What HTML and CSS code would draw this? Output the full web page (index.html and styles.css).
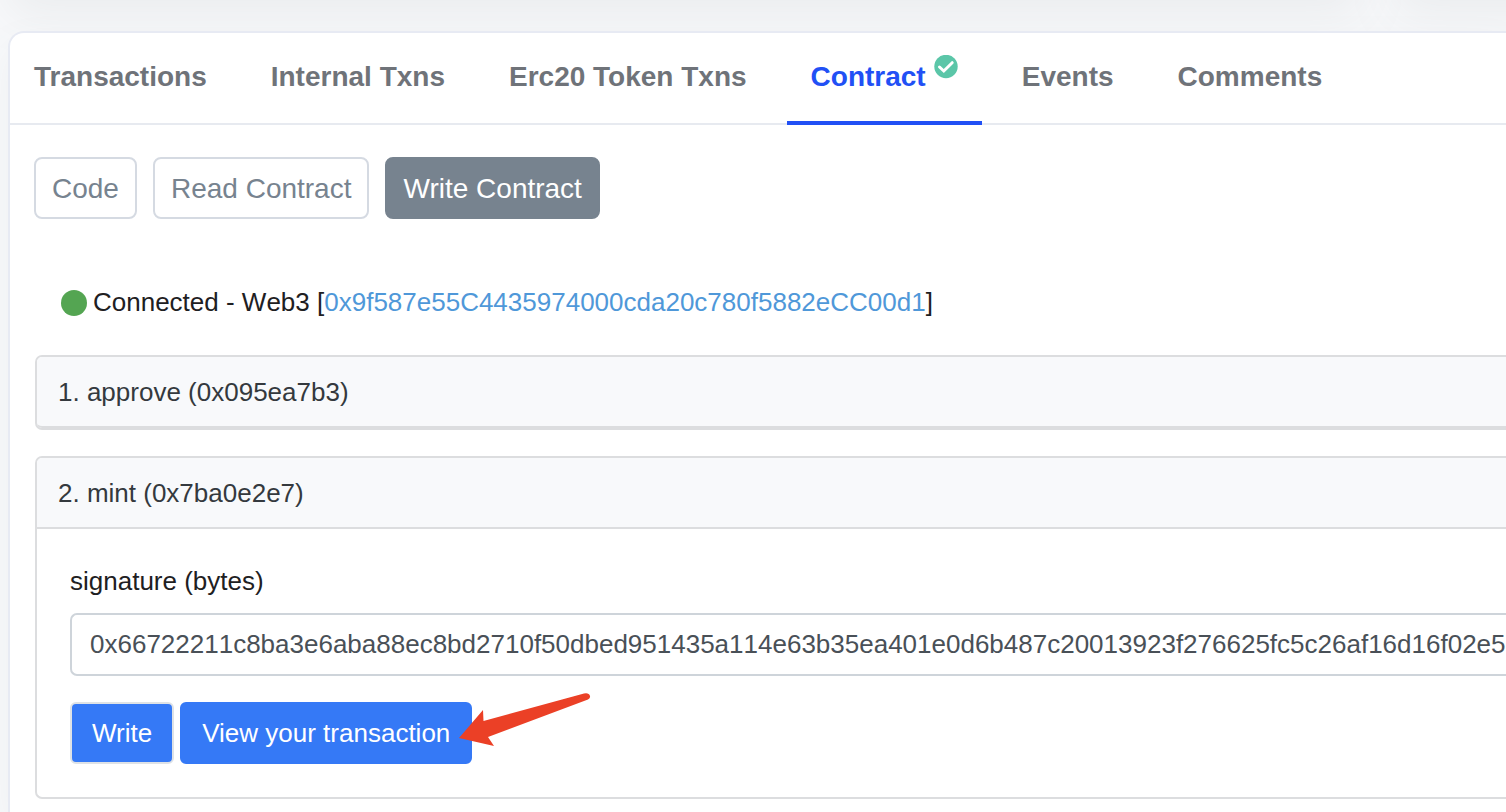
FILE: index.html
```html
<!DOCTYPE html>
<html lang="en">
<head>
  <meta charset="UTF-8" />
  <meta name="viewport" content="width=device-width, initial-scale=1.0"/>
  <title>Write Contract</title>
  <link rel="stylesheet" href="styles.css">
</head>
<body>

  <!-- Bottom edge of the summary cards -->
  <div class="summary">
    <div class="summary-card summary-main"></div>
    <div class="summary-card summary-side"></div>
  </div>

  <main class="card">
    <!-- Tabs -->
    <nav class="tabs">
      <a href="#transactions">Transactions</a>
      <a href="#internaltx">Internal Txns</a>
      <a href="#tokentxns">Erc20 Token Txns</a>
      <a href="#code" class="active">Contract
        <svg class="verified" viewBox="0 0 24 24" aria-hidden="true">
          <circle cx="12" cy="11.500" r="11.700" fill="#5bc6a8"/>
          <path d="M5.500 12 L9.800 16 L18.200 7.700" fill="none" stroke="#fff" stroke-width="3" stroke-linecap="round"/>
        </svg>
      </a>
      <a href="#events">Events</a>
      <a href="#comments">Comments</a>
    </nav>

    <!-- Code / Read / Write -->
    <div class="pills">
      <button type="button">Code</button>
      <button type="button">Read Contract</button>
      <button type="button" class="active">Write Contract</button>
    </div>

    <section class="contract">
      <div class="status">
        <span class="dot"></span>
        <span>Connected - Web3 [<a href="#address">0x9f587e55C4435974000cda20c780f5882eCC00d1</a>]</span>
      </div>

      <div class="panel collapsed">
        <div class="panel-header">1. approve (0x095ea7b3)</div>
      </div>

      <div class="panel">
        <div class="panel-header">2. mint (0x7ba0e2e7)</div>
        <form class="panel-body">
          <label for="signature">signature (bytes)</label>
          <input type="text" id="signature" name="signature" value="0x66722211c8ba3e6aba88ec8bd2710f50dbed951435a114e63b35ea401e0d6b487c20013923f276625fc5c26af16d16f02e5">
          <div class="actions">
            <button type="button" class="btn btn-write">Write</button>
            <div class="pointed">
              <button type="button" class="btn">View your transaction</button>
              <svg class="arrow" viewBox="0 0 132 54" aria-hidden="true">
                <path d="M0 45 L24 17 L24.5 28 L125 .5 Q130 -.5 131 3 Q131.500 5.500 129 6.500 L29 44 L35 53 Z" fill="#eb4026"/>
              </svg>
            </div>
          </div>
        </form>
      </div>
    </section>
  </main>

</body>
</html>
```

FILE: styles.css
```css
* {
  box-sizing: border-box;
}
body {
  display: flex;
  flex-direction: column;
  min-height: 100vh;
  margin: 0;
  background-color: #f8f9fb;
  color: #1e2022;
  font-family: "Liberation Sans", Arial, sans-serif;
  font-size: 26px;
  line-height: 39px;
}
button, input {
  font: inherit;
}
a {
  text-decoration: none;
}

/* Summary cards */
.summary {
  display: flex;
  gap: 30px;
  height: 31px;
  padding-left: 8px;
  overflow-x: clip;
}
.summary-card {
  height: 80px;
  margin-top: -80px;
  box-shadow: 0 16px 48px rgba(120, 125, 130, 0.1);
}
.summary-main {
  flex: 7;
}
.summary-side {
  flex: 1;
  margin-right: -80px;
}

/* Card */
.card {
  flex: 1;
  margin-left: 8px;
  padding-bottom: 13px;
  border: 2px solid #e7eaf3;
  border-right: none;
  border-bottom: none;
  border-radius: 16px 0 0 0;
  background-color: #fff;
  box-shadow: 0 16px 38px rgba(120, 125, 130, 0.08);
}

/* Tabs */
.tabs {
  display: flex;
  gap: 16px;
  border-bottom: 2px solid #e7eaf0;
}
.tabs a {
  display: flex;
  gap: 8px;
  margin-bottom: -2px;
  padding: 22px 24px;
  border-bottom: 4px solid transparent;
  color: #6f7379;
  font-size: 28px;
  font-weight: bold;
  line-height: 44px;
  white-space: nowrap;
}
.tabs a.active {
  border-color: #2150f5;
  color: #2150f5;
}
.verified {
  width: 24px;
  height: 24px;
}

/* Buttons under the tabs */
.pills {
  display: flex;
  gap: 16px;
  padding: 32px 24px;
}
.pills button {
  height: 62px;
  padding: 0 16px;
  border: 2px solid #d5dae2;
  border-radius: 8px;
  background-color: #fff;
  color: #77838f;
  font-size: 28px;
}
.pills button.active {
  border-color: #77838f;
  background-color: #77838f;
  color: #fff;
}

/* Write contract */
.contract {
  padding: 32px 0 0 25px;
}
.status {
  display: flex;
  align-items: center;
  gap: 6px;
  padding: 0 26px;
  margin-bottom: 33px;
  font-kerning: none;
}
.status a {
  color: #4f98d9;
}
.dot {
  width: 26px;
  height: 26px;
  border-radius: 50%;
  background-color: #54a552;
}
.panel {
  border: 2px solid #dcdddf;
  border-right: none;
  border-radius: 7px 0 0 7px;
}
.panel-header {
  padding: 16px 21px 14px;
  border-bottom: 2px solid #dcdddf;
  border-radius: 5px 0 0 0;
  background-color: #f8f9fb;
  color: #34393e;
}
.collapsed {
  margin-bottom: 26px;
}
.collapsed .panel-header {
  border-radius: 5px 0 0 5px;
}
.panel-body {
  padding: 33px 0 33px 33px;
}
.panel-body label {
  display: block;
  margin-bottom: 12px;
}
.panel-body input {
  display: block;
  width: 100%;
  height: 63px;
  margin-bottom: 26px;
  padding: 0 0 0 18px;
  border: 2px solid #ced4da;
  border-right: none;
  border-radius: 7px 0 0 7px;
  background-color: #fff;
  color: #495057;
  font-kerning: none;
}
.actions {
  display: flex;
  gap: 6px;
}
.btn {
  height: 62px;
  padding: 0 20px;
  border: 2px solid #3579f6;
  border-radius: 6px;
  background-color: #3579f6;
  color: #fff;
}
.btn-write {
  border-color: #dee2e6;
}

/* Arrow over the transaction button */
.pointed {
  position: relative;
}
.arrow {
  position: absolute;
  top: -9px;
  left: 279px;
  width: 132px;
  height: 54px;
}
```
